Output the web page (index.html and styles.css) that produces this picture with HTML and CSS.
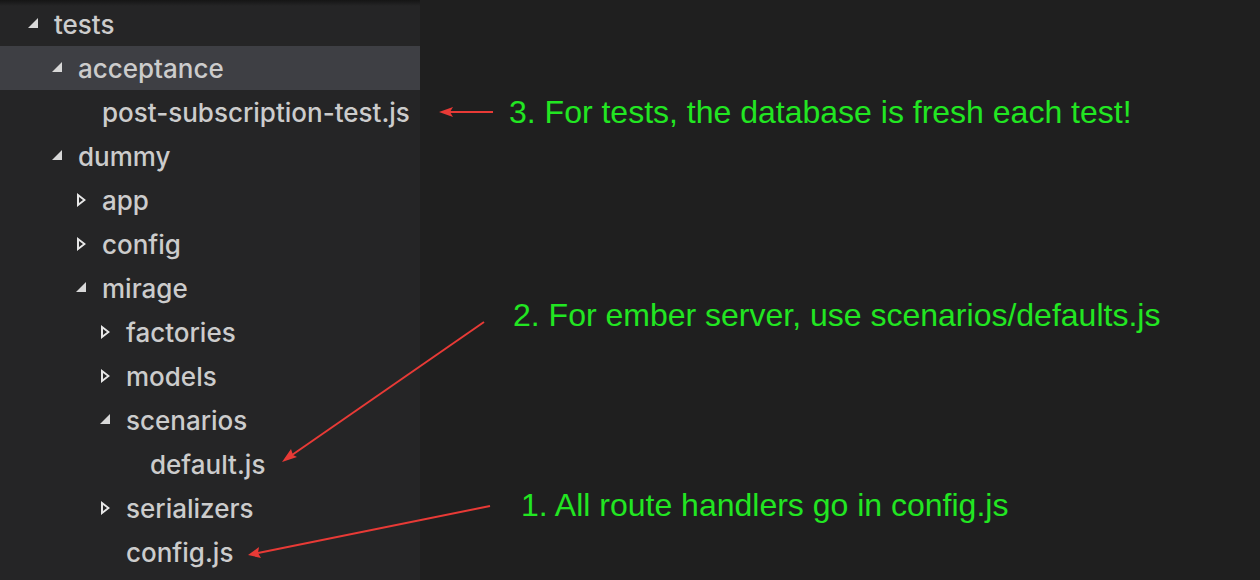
FILE: index.html
```html
<!DOCTYPE html>
<html>
<head>
<meta charset="utf-8">
<link rel="stylesheet" href="styles.css">
</head>
<body>
<div class="app">
  <aside class="sidebar">
    <ul class="tree">
      <li class="row lvl1"><span class="tw open"></span><span class="name">tests</span></li>
      <li class="row lvl2 selected"><span class="tw open"></span><span class="name">acceptance</span></li>
      <li class="row lvl3"><span class="tw none"></span><span class="name">post-subscription-test.js</span></li>
      <li class="row lvl2"><span class="tw open"></span><span class="name">dummy</span></li>
      <li class="row lvl3"><span class="tw closed"></span><span class="name">app</span></li>
      <li class="row lvl3"><span class="tw closed"></span><span class="name">config</span></li>
      <li class="row lvl3"><span class="tw open"></span><span class="name">mirage</span></li>
      <li class="row lvl4"><span class="tw closed"></span><span class="name">factories</span></li>
      <li class="row lvl4"><span class="tw closed"></span><span class="name">models</span></li>
      <li class="row lvl4"><span class="tw open"></span><span class="name">scenarios</span></li>
      <li class="row lvl5"><span class="tw none"></span><span class="name">default.js</span></li>
      <li class="row lvl4"><span class="tw closed"></span><span class="name">serializers</span></li>
      <li class="row lvl4"><span class="tw none"></span><span class="name">config.js</span></li>
    </ul>
  </aside>
  <main class="pane"></main>

  <div class="notes">
    <p class="note note3">3. For tests, the database is fresh each test!</p>
    <p class="note note2">2. For ember server, use scenarios/defaults.js</p>
    <p class="note note1">1. All route handlers go in config.js</p>
    <svg class="arrows" width="1260" height="580" viewBox="0 0 1260 580">
      <g stroke="#e83a36" stroke-width="2" fill="none">
        <line x1="493" y1="112" x2="450" y2="112"/>
        <line x1="484" y1="322" x2="292" y2="455"/>
        <line x1="490" y1="506" x2="258" y2="553"/>
      </g>
      <g fill="#e83a36">
        <polygon points="439,112 453,107 450,112 453,117"/>
        <polygon points="282,462 291,449 293,455 297,457"/>
        <polygon points="248,555 259,547 258,553 261,558"/>
      </g>
    </svg>
  </div>
</div>
</body>
</html>
```

FILE: styles.css
```css
html, body {
  margin: 0;
  padding: 0;
  background: #1f1f1f;
}
.app {
  position: relative;
  display: flex;
  width: 1260px;
  height: 580px;
  overflow: hidden;
  background: #1f1f1f;
}
.app::before {
  content: "";
  position: absolute;
  left: 0;
  top: 0;
  width: 420px;
  height: 6px;
  background: linear-gradient(#151515, rgba(37,37,37,0));
  z-index: 2;
}
.sidebar {
  width: 420px;
  flex: none;
  background: #252526;
  padding-top: 2px;
}
.pane {
  flex: 1;
  background: #1f1f1f;
}
.tree {
  list-style: none;
  margin: 0;
  padding: 0;
}
.row {
  height: 44px;
  display: flex;
  align-items: center;
  font-family: "Inter", "Liberation Sans", sans-serif;
  font-size: 26px;
  font-weight: 500;
  color: #cccccc;
  white-space: nowrap;
}
.row.selected {
  background: #3e3f44;
}
.lvl1 { padding-left: 28px; }
.lvl2 { padding-left: 52px; }
.lvl3 { padding-left: 76px; }
.lvl4 { padding-left: 100px; }
.lvl5 { padding-left: 124px; }
.tw {
  width: 26px;
  height: 14px;
  flex: none;
  position: relative;
}
.tw.open::after {
  content: "";
  position: absolute;
  left: 0;
  top: 1px;
  width: 0;
  height: 0;
  border-style: solid;
  border-width: 0 0 10px 10px;
  border-color: transparent transparent #d8d8d8 transparent;
}
.tw.closed::after {
  content: "";
  position: absolute;
  left: 1px;
  top: 0;
  width: 9px;
  height: 14px;
  background: #e6e6e6;
  clip-path: polygon(0 0, 100% 50%, 0 100%, 0 0, 2px 4px, 2px calc(100% - 4px), calc(100% - 3px) 50%, 2px 4px);
}
.name {
  line-height: 44px;
  padding-top: 1px;
}
.notes {
  position: absolute;
  inset: 0;
  pointer-events: none;
}
.note {
  position: absolute;
  margin: 0;
  font-family: "Liberation Sans", Arial, sans-serif;
  font-size: 32px;
  line-height: 34px;
  color: #22e622;
  white-space: nowrap;
}
.note3 { left: 509px; top: 95px; }
.note2 { left: 513px; top: 298px; }
.note1 { left: 521px; top: 488px; }
.arrows {
  position: absolute;
  left: 0;
  top: 0;
}
```
